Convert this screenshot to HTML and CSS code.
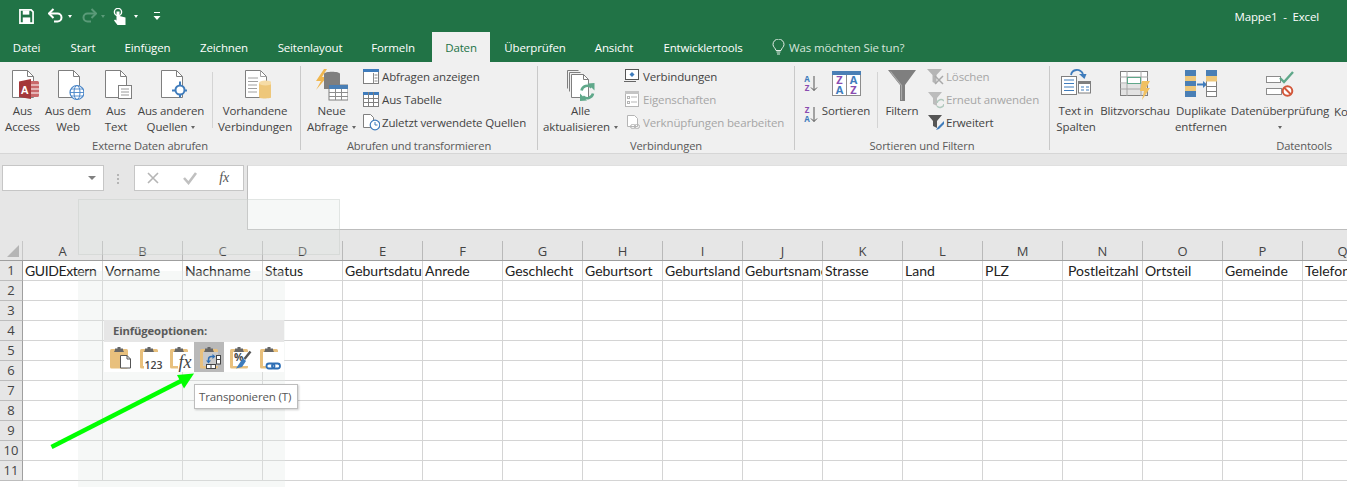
FILE: index.html
```html
<!DOCTYPE html>
<html lang="de">
<head>
<meta charset="utf-8">
<title>Mappe1 - Excel</title>
<link rel="stylesheet" href="styles.css">
</head>
<body>
<svg class="defs" width="0" height="0">
  <defs>
    <symbol id="clip" viewBox="0 0 30 30">
      <rect x="6" y="7" width="18" height="19.500" rx="1.500" fill="#e8c07d"/>
      <path d="M11 8V6.500h2.500V5h3v1.500H19V8l1 2H10z" fill="#666"/>
    </symbol>
    <symbol id="clipo" viewBox="0 0 30 30">
      <rect x="6" y="7" width="18" height="19.500" rx="1.500" fill="#e8c07d"/>
      <rect x="9" y="10" width="15" height="14" fill="#fff"/>
      <path d="M11 8V6.500h2.500V5h3v1.500H19V8l1 2H10z" fill="#666"/>
    </symbol>
  </defs>
</svg>

<header class="titlebar">
  <div class="qat">
    <svg class="q-save" width="15" height="15" viewBox="0 0 16 16"><path d="M1 1h12l2 2v12H1z" fill="none" stroke="#fff" stroke-width="1.800"/><rect x="4" y="1.500" width="7" height="4.500" fill="#fff"/><rect x="4" y="9" width="8" height="6" fill="#fff"/></svg>
    <svg class="q-undo" width="15" height="16" viewBox="0 0 15 16"><path d="M2 5.500h7.500a4 4 0 0 1 0 8H6" fill="none" stroke="#fff" stroke-width="2"/><path d="M5.500 1 1 5.500 5.500 10" fill="none" stroke="#fff" stroke-width="2"/></svg>
    <i class="caret-w"></i>
    <svg class="q-redo" width="15" height="16" viewBox="0 0 15 16"><path d="M13 5.500H5.500a4 4 0 0 0 0 8H9" fill="none" stroke="#5a9a78" stroke-width="2"/><path d="M9.500 1 14 5.500 9.500 10" fill="none" stroke="#5a9a78" stroke-width="2"/></svg>
    <i class="caret-d"></i>
    <svg class="q-touch" width="14" height="17" viewBox="0 0 14 17"><circle cx="5" cy="4" r="3.600" fill="none" stroke="#fff" stroke-width="1.400"/><path d="M3.500 3.500h3V8l6 1.500V17H4.500L1 12.500l1-1L3.500 12.500z" fill="#fff"/></svg>
    <i class="caret-w caret-touch"></i>
    <svg class="q-more" width="8" height="9" viewBox="0 0 8 9"><path d="M1 .5h6" stroke="#fff"/><path d="M.5 4h7L4 8z" fill="#fff"/></svg>
  </div>
  <div class="doc-title">Mappe1&nbsp; -&nbsp; Excel</div>
</header>

<nav class="tabs">
  <span class="tab t-datei">Datei</span>
  <span class="tab t-start">Start</span>
  <span class="tab t-einf">Einfügen</span>
  <span class="tab t-zeich">Zeichnen</span>
  <span class="tab t-seite">Seitenlayout</span>
  <span class="tab t-formel">Formeln</span>
  <span class="tab t-daten active">Daten</span>
  <span class="tab t-pruef">Überprüfen</span>
  <span class="tab t-ansicht">Ansicht</span>
  <span class="tab t-entw">Entwicklertools</span>
  <span class="tell">
    <svg width="13" height="17" viewBox="0 0 13 17"><path d="M4 11.500C3.500 9 1 8 1 5.500a5.500 5.500 0 0 1 11 0c0 2.500-2.500 3.500-3 6z" fill="none" stroke="#e4efe8"/><path d="M4.500 13h4M5 15h3" stroke="#e4efe8"/></svg>
    Was möchten Sie tun?
  </span>
</nav>

<section class="ribbon">
  <div class="group g1">
    <div class="gbody">
      <div class="big w45">
        <svg class="bi" viewBox="6 69 32 32"><path d="M11.500 70.500h15l6 6v21h-21z" fill="#fff" stroke="#7f7f7f"/><path d="M26.500 70.500v6h6" fill="none" stroke="#7f7f7f"/><path d="M30 81h6.500a1.500 1.500 0 0 1 1.500 1.500v13a1.500 1.500 0 0 1-1.500 1.500H30z" fill="#c9696b"/><path d="M30 85h8M30 89h8M30 93h8" stroke="#fff"/><path d="M18 81.500 30 79v20l-12-2z" fill="#a4373a"/><text x="23.800" y="93.500" class="svg-a">A</text></svg>
        <span>Aus</span><span>Access</span>
      </div>
      <div class="big w46">
        <svg class="bi" viewBox="52 69 32 32"><path d="M58.500 70.500h15l6 6v21h-21z" fill="#fff" stroke="#7f7f7f"/><path d="M73.500 70.500v6h6" fill="none" stroke="#7f7f7f"/><circle cx="77" cy="92.500" r="7" fill="#fff" stroke="#4a86c8" stroke-width="1.200"/><ellipse cx="77" cy="92.500" rx="3" ry="7" fill="none" stroke="#4a86c8"/><path d="M70 92.500h14M71 89h12M71 96h12" stroke="#4a86c8" stroke-width=".9"/></svg>
        <span>Aus dem</span><span>Web</span>
      </div>
      <div class="big w50">
        <svg class="bi" viewBox="100 69 32 32"><path d="M105.500 70.500h15l6 6v21h-21z" fill="#fff" stroke="#7f7f7f"/><path d="M120.500 70.500v6h6" fill="none" stroke="#7f7f7f"/><rect x="118.500" y="85.500" width="13" height="13" fill="#fff" stroke="#7f7f7f"/><path d="M121 89h8M121 92h8M121 95h8" stroke="#9a9a9a"/></svg>
        <span>Aus</span><span>Text</span>
      </div>
      <div class="big w60">
        <svg class="bi" viewBox="155 69 32 32"><path d="M161.500 70.500h15l6 6v21h-21z" fill="#fff" stroke="#7f7f7f"/><path d="M176.500 70.500v6h6" fill="none" stroke="#7f7f7f"/><path d="M180 81.500v16M172 90.500h15.500" stroke="#3f7cbc" stroke-width="2"/><circle cx="180" cy="90" r="4.500" fill="#fff" stroke="#3f7cbc" stroke-width="2"/></svg>
        <span>Aus anderen</span><span>Quellen<i class="caret"></i></span>
      </div>
      <div class="vsep ml11"></div>
      <div class="big w84">
        <svg class="bi" viewBox="239 69 32 32"><path d="M245.500 70.500h15l6 6v21h-21z" fill="#fff" stroke="#7f7f7f"/><path d="M260.500 70.500v6h6M248 78h10M248 81.500h10M248 85h9M248 88.500h9M248 92h9" fill="none" stroke="#a0a0a0"/><path d="M259 83v14c0 2 13 2 13 0V83z" fill="#eec77a"/><ellipse cx="265.500" cy="83" rx="6.500" ry="2.500" fill="#f6dca6"/></svg>
        <span>Vorhandene</span><span>Verbindungen</span>
      </div>
    </div>
    <div class="glabel">Externe Daten abrufen</div>
  </div>

  <div class="group g2">
    <div class="gbody">
      <div class="big w61">
        <svg class="bi" viewBox="316 69 32 32"><path d="M324 69l-8 12h5l-5 9 11-13h-5l5-8z" fill="#f0b64e"/><path d="M324 74v15h16V74c0-3-16-3-16 0z" fill="#7f7f7f"/><rect x="329" y="85" width="19" height="15" fill="#fff" stroke="#7f7f7f"/><rect x="329" y="85" width="19" height="4" fill="#4a7fb5"/><path d="M335.500 89v11M341.500 89v11M329 92.500h19M329 96.500h19" stroke="#8d8d8d"/></svg>
        <span>Neue</span><span>Abfrage<i class="caret"></i></span>
      </div>
      <div class="smalls">
        <div class="small"><svg class="si" viewBox="362 68 18 18"><rect x="363.500" y="69.500" width="15" height="14" fill="#fff" stroke="#7f7f7f"/><rect x="363" y="69" width="16" height="3" fill="#3f7cbc"/><path d="M373.500 73v10M374.500 75h3M374.500 78h3M374.500 81h3" stroke="#8a8a8a"/></svg>Abfragen anzeigen</div>
        <div class="small"><svg class="si" viewBox="362 91 18 18"><rect x="363.500" y="92.500" width="15" height="14" fill="#fff" stroke="#7f7f7f"/><rect x="363" y="92" width="16" height="3" fill="#3f7cbc"/><path d="M368.500 92v15M373.500 92v15M363 98.500h16M363 102.500h16" stroke="#7f7f7f"/></svg>Aus Tabelle</div>
        <div class="small"><svg class="si" viewBox="362 114 18 18"><path d="M363.500 114.500h7l3 3v10h-10z" fill="#fff" stroke="#7f7f7f"/><circle cx="375" cy="125" r="4.800" fill="#fff" stroke="#3f7cbc" stroke-width="1.200"/><path d="M375 122v3h2.500" fill="none" stroke="#3f7cbc"/></svg>Zuletzt verwendete Quellen</div>
      </div>
    </div>
    <div class="glabel">Abrufen und transformieren</div>
  </div>

  <div class="group g3">
    <div class="gbody">
      <div class="big w85">
        <svg class="bi" viewBox="566 69 32 32"><path d="M568.500 70.500h11M568.500 70.500v18M570.500 72.500h11M570.500 72.500v19" fill="none" stroke="#7f7f7f"/><path d="M572.500 74.500h12l5 5v18h-17z" fill="#fff" stroke="#7f7f7f"/><path d="M584.500 74.500v5h5" fill="none" stroke="#7f7f7f"/><path d="M582.500 90.500a6 6 0 0 1 10-3" fill="none" stroke="#5fa88a" stroke-width="2.600"/><path d="M595.500 90.500V83l-7 .5z" fill="#5fa88a"/><path d="M594 93.500a6 6 0 0 1-10 3" fill="none" stroke="#5fa88a" stroke-width="2.600"/><path d="M581 93.500v7.500l7-.5z" fill="#5fa88a"/></svg>
        <span>Alle</span><span>aktualisieren<i class="caret"></i></span>
      </div>
      <div class="smalls">
        <div class="small"><svg class="si" viewBox="623 68 18 18"><rect x="625.500" y="69.500" width="13" height="10" fill="#fff" stroke="#555"/><path d="M624 81.500h12" stroke="#666"/><path d="M632 72l2.500 2.500L632 77l-2.500-2.500z" fill="#3f7cbc"/></svg>Verbindungen</div>
        <div class="small disabled"><svg class="si" viewBox="623 91 18 18"><rect x="625.500" y="91.500" width="13" height="15" fill="#fff" stroke="#b5b5b5"/><rect x="625" y="91" width="14" height="3" fill="#c4c4c4"/><path d="M631 97h6M631 102h6" stroke="#b5b5b5"/><rect x="627.500" y="96.500" width="2" height="2" fill="none" stroke="#b5b5b5"/><rect x="627.500" y="101.500" width="2" height="2" fill="none" stroke="#b5b5b5"/></svg>Eigenschaften</div>
        <div class="small disabled"><svg class="si" viewBox="623 114 18 18"><path d="M627.500 115.500h7l3 3v8h-10z" fill="#fff" stroke="#b5b5b5"/><rect x="630.500" y="124.500" width="5" height="4" rx="2" fill="none" stroke="#b5b5b5"/><rect x="634.500" y="124.500" width="5" height="4" rx="2" fill="none" stroke="#b5b5b5"/></svg>Verknüpfungen bearbeiten</div>
      </div>
    </div>
    <div class="glabel">Verbindungen</div>
  </div>

  <div class="group g4">
    <div class="gbody">
      <div class="sorts">
        <svg class="sort-ic" viewBox="0 0 18 18"><text x="5" y="7" class="sv-b">A</text><text x="5" y="15.500" class="sv-p">Z</text><path d="M12 1v14.500M9 12.500l3 3 3-3" fill="none" stroke="#555"/></svg>
        <svg class="sort-ic" viewBox="0 0 18 18"><text x="5" y="7" class="sv-p">Z</text><text x="5" y="15.500" class="sv-b">A</text><path d="M12 1v14.500M9 12.500l3 3 3-3" fill="none" stroke="#555"/></svg>
      </div>
      <div class="big w52">
        <svg class="bi" viewBox="830 69 32 32"><rect x="832.500" y="71.500" width="28" height="24" fill="#fff" stroke="#8c8c8c"/><rect x="832" y="71" width="29" height="4" fill="#4a7fb5"/><path d="M846.500 75v21" stroke="#8c8c8c"/><text x="839.500" y="84" class="sv-pl">Z</text><text x="839.500" y="94" class="sv-bl">A</text><text x="853.500" y="84" class="sv-bl">A</text><text x="853.500" y="94" class="sv-pl">Z</text></svg>
        <span>Sortieren</span>
      </div>
      <div class="vsep ml5"></div>
      <div class="big w48">
        <svg class="bi" viewBox="886 69 32 32"><path d="M888 70h28l-11 15v16h-5V85z" fill="#7f7f7f"/><path d="M890.500 71.500l11 14V100" fill="none" stroke="#a8a8a8" stroke-width="1.200"/></svg>
        <span>Filtern</span>
      </div>
      <div class="smalls">
        <div class="small disabled"><svg class="si" viewBox="926 68 18 18"><path d="M927 69h15l-5.500 6v9l-4-2v-7z" fill="#b5b5b5"/><path d="M935 76l8 8M943 76l-8 8" stroke="#a9a9a9" stroke-width="1.500"/></svg>Löschen</div>
        <div class="small disabled"><svg class="si" viewBox="926 91 18 18"><path d="M928 92h14l-5 6v8l-4-2v-6z" fill="#bcbcbc"/><path d="M937 103a4 4 0 0 1 7-2M944 104a4 4 0 0 1-7 2" fill="none" stroke="#b0c9bd" stroke-width="1.500"/></svg>Erneut anwenden</div>
        <div class="small"><svg class="si" viewBox="926 114 18 18"><path d="M928 115h14l-5 6v7l-4-2v-5z" fill="#555"/><path d="M945 120l-7 7-2 3 3-1 7-7z" fill="#3f7cbc"/></svg>Erweitert</div>
      </div>
    </div>
    <div class="glabel">Sortieren und Filtern</div>
  </div>

  <div class="group g5">
    <div class="gbody">
      <div class="big w52">
        <svg class="bi" viewBox="1060 69 32 32"><rect x="1061.500" y="76.500" width="15" height="18" fill="#fff" stroke="#7f7f7f"/><path d="M1064 80h10M1064 83.500h10M1064 87h10M1064 90.500h10" stroke="#3f7cbc"/><rect x="1078.500" y="81.500" width="12" height="11.500" fill="#fff" stroke="#7f7f7f"/><rect x="1078" y="81" width="13" height="3" fill="#7f7f7f"/><path d="M1081 87h3M1086 87h3M1081 90h3M1086 90h3" stroke="#3f7cbc"/><path d="M1071 75c1-6 9-7 12-1" fill="none" stroke="#3f7cbc" stroke-width="1.800"/><path d="M1079 74h7.500l-2 5z" fill="#3f7cbc"/></svg>
        <span>Text in</span><span>Spalten</span>
      </div>
      <div class="big w66">
        <svg class="bi" viewBox="1120 69 32 32"><rect x="1121.500" y="71.500" width="27" height="24" fill="#fff" stroke="#7f7f7f"/><rect x="1122" y="84" width="26" height="11" fill="#e3e3e3"/><path d="M1121 77h28M1121 83h28M1121 89h28M1128 71v25M1142 71v25" stroke="#a6a6a6"/><rect x="1128.500" y="77.500" width="13" height="6" fill="#fff" stroke="#5fa88a"/><path d="M1143 81h8l-4 7h4l-8 12 2-9h-4z" fill="#f0c060"/></svg>
        <span>Blitzvorschau</span>
      </div>
      <div class="big w66">
        <svg class="bi" viewBox="1185 69 32 32"><rect x="1185" y="70" width="11" height="27" fill="#4a7fb5"/><rect x="1185" y="76" width="11" height="5" fill="#eec77a"/><rect x="1185" y="86" width="11" height="5" fill="#eec77a"/><path d="M1197 84.500h7" stroke="#3f7cbc" stroke-width="2"/><path d="M1203 81l4 3.500-4 3.500z" fill="#3f7cbc"/><rect x="1206.500" y="70.500" width="10" height="26" fill="#fff" stroke="#7f7f7f"/><rect x="1206" y="70" width="11" height="6" fill="#4a7fb5"/><rect x="1206" y="76" width="11" height="5.500" fill="#eec77a"/><path d="M1206 86.500h11M1206 91.500h11" stroke="#7f7f7f"/></svg>
        <span>Duplikate</span><span>entfernen</span>
      </div>
      <div class="big w92">
        <svg class="bi" viewBox="1264 69 32 32"><rect x="1266.500" y="76.500" width="14" height="6" fill="#fff" stroke="#8c8c8c"/><rect x="1266.500" y="88.500" width="15" height="6" fill="#fff" stroke="#8c8c8c"/><path d="M1280 78l4 4 9-10" fill="none" stroke="#5fa88a" stroke-width="2.400"/><circle cx="1287.500" cy="91" r="4.800" fill="#fff" stroke="#d2573a" stroke-width="2"/><path d="M1284 87.500l7 7" stroke="#d2573a" stroke-width="2"/></svg>
        <span>Datenüberprüfung</span><span><i class="caret solo"></i></span>
      </div>
      <div class="clipped">Ko</div>
    </div>
    <div class="glabel">Datentools</div>
  </div>
</section>

<section class="fbar">
  <div class="namebox"><i class="caret-g"></i></div>
  <div class="grip"></div>
  <div class="fxbox">
    <svg width="14" height="14" viewBox="0 0 14 14"><path d="M2 2l10 10M12 2L2 12" stroke="#b5b5b5" stroke-width="1.600"/></svg>
    <svg width="16" height="14" viewBox="0 0 16 14"><path d="M2 7l4.500 5L14 2" fill="none" stroke="#c0c0c0" stroke-width="2.600"/></svg>
    <span class="fx">fx</span>
  </div>
  <div class="finput"></div>
</section>

<section class="sheet">
  <div class="hrow">
    <div class="corner"><i class="tri"></i></div>
    <div class="ch">A</div><div class="ch">B</div><div class="ch">C</div><div class="ch">D</div><div class="ch">E</div><div class="ch">F</div><div class="ch">G</div><div class="ch">H</div><div class="ch">I</div><div class="ch">J</div><div class="ch">K</div><div class="ch">L</div><div class="ch">M</div><div class="ch">N</div><div class="ch">O</div><div class="ch">P</div><div class="ch">Q</div>
  </div>
  <div class="row">
    <div class="rh">1</div>
    <div class="cell tight">GUIDExtern</div><div class="cell">Vorname</div><div class="cell">Nachname</div><div class="cell">Status</div><div class="cell">Geburtsdatum</div><div class="cell">Anrede</div><div class="cell">Geschlecht</div><div class="cell">Geburtsort</div><div class="cell">Geburtsland</div><div class="cell">Geburtsname</div><div class="cell">Strasse</div><div class="cell">Land</div><div class="cell">PLZ</div><div class="cell indent">Postleitzahl</div><div class="cell">Ortsteil</div><div class="cell">Gemeinde</div><div class="cell">Telefon</div>
  </div>
  <div class="row"><div class="rh">2</div><div class="blank"></div></div>
  <div class="row"><div class="rh">3</div><div class="blank"></div></div>
  <div class="row"><div class="rh">4</div><div class="blank"></div></div>
  <div class="row"><div class="rh">5</div><div class="blank"></div></div>
  <div class="row"><div class="rh">6</div><div class="blank"></div></div>
  <div class="row"><div class="rh">7</div><div class="blank"></div></div>
  <div class="row"><div class="rh">8</div><div class="blank"></div></div>
  <div class="row"><div class="rh">9</div><div class="blank"></div></div>
  <div class="row"><div class="rh">10</div><div class="blank"></div></div>
  <div class="row"><div class="rh">11</div><div class="blank"></div></div>
</section>

<div class="ghost ghost-top"></div>
<div class="ghost ghost-bottom"></div>

<div class="paste">
  <div class="paste-head">Einfügeoptionen:</div>
  <div class="paste-row">
    <div class="pb"><svg viewBox="0 0 30 30"><use href="#clip"/><path d="M16.500 13.500h6.500l3.500 3.500v9h-10z" fill="#fff" stroke="#555"/><path d="M23 13.500V17h3.500" fill="none" stroke="#555"/></svg></div>
    <div class="pb"><svg viewBox="0 0 30 30"><use href="#clipo"/><rect x="10" y="18" width="20" height="10" fill="#fff"/><text x="10.500" y="26.500" class="p123">123</text></svg></div>
    <div class="pb"><svg viewBox="0 0 30 30"><use href="#clipo"/><rect x="14" y="10" width="13" height="18" fill="#fff"/><text x="14.500" y="25.500" class="pfx">fx</text></svg></div>
    <div class="pb hot"><svg viewBox="0 0 30 30"><use href="#clip"/><rect x="9" y="10" width="15" height="14" fill="#c9c9c9"/><rect x="22.500" y="13.500" width="4" height="8.500" fill="#fff" stroke="#444"/><path d="M22.500 17.500h4" stroke="#444"/><rect x="12.500" y="22.500" width="9" height="4" fill="#fff" stroke="#444"/><path d="M17 22.500v4" stroke="#444"/><path d="M14.500 19v-1.500a3 3 0 0 1 3-3H19" fill="none" stroke="#2f6fb5" stroke-width="1.500"/><path d="M18.500 12l3 2.500-3 2.500zM12 18.500h5L14.500 21.500z" fill="#2f6fb5"/></svg></div>
    <div class="pb"><svg viewBox="0 0 30 30"><use href="#clipo"/><text x="10" y="19" class="ppct">%</text><path d="M26.500 9.500 20.500 17" stroke="#555" stroke-width="2.400"/><path d="M19 16l3 3-4 6-6 1.500z" fill="#3f7cbc"/></svg></div>
    <div class="pb"><svg viewBox="0 0 30 30"><use href="#clipo"/><rect x="12" y="20" width="16" height="8" fill="#fff"/><rect x="12.500" y="21.500" width="8" height="5" rx="2.500" fill="none" stroke="#2f6fb5" stroke-width="1.800"/><rect x="18" y="21.500" width="8" height="5" rx="2.500" fill="none" stroke="#2f6fb5" stroke-width="1.800"/></svg></div>
  </div>
</div>

<div class="tooltip">Transponieren (T)</div>

<svg class="arrow" width="160" height="90" viewBox="40 365 160 90"><path d="M51.500 447 181 381" stroke="#0f0" stroke-width="4.500" fill="none"/><path d="M194 373.500 177 375 184 388.500z" fill="#0f0"/></svg>
</body>
</html>
```

FILE: styles.css
```css
* { box-sizing: border-box; }
html, body { margin: 0; padding: 0; }
body {
  position: relative;
  width: 1347px;
  height: 487px;
  overflow: hidden;
  background: #fff;
  font-family: "Open Sans", "Noto Sans", "Liberation Sans", sans-serif;
  font-size: 11.500px;
  letter-spacing: -.14px;
  color: #444;
}
svg text { letter-spacing: 0; }
.defs { position: absolute; }

/* title bar */
.titlebar { height: 32px; background: #217346; display: flex; align-items: center; color: #fff; }
.qat { display: flex; align-items: center; padding-left: 19px; }
.q-undo { margin-left: 14px; }
.q-redo { margin-left: 10px; }
.q-touch { margin-left: 8px; }
.q-more { margin-left: 15px; }
.caret-w, .caret-d { width: 0; height: 0; border: 2.500px solid transparent; border-bottom: 0; border-top: 3px solid #fff; margin-left: 5px; }
.caret-d { border-top-color: #5a9a78; margin-left: 4px; }
.caret-touch { margin-left: 7px; }
.doc-title { margin-left: auto; margin-right: 28px; }

/* tabs */
.tabs { height: 30px; background: #217346; display: flex; color: #fff; }
.tab { display: flex; align-items: center; justify-content: center; height: 30px; }
.t-datei { width: 53px; }
.t-start { width: 60px; }
.t-einf { width: 69px; }
.t-zeich { width: 84px; }
.t-seite { width: 88px; }
.t-formel { width: 78px; }
.t-daten { width: 58px; }
.t-pruef { width: 90px; }
.t-ansicht { width: 68px; }
.t-entw { width: 110px; }
.active { background: #f0f0f0; color: #217346; }
.tell { display: flex; align-items: center; gap: 4px; margin-left: 14px; color: #d6e6dc; }

/* ribbon */
.ribbon { height: 92px; background: #f0f0f0; border-bottom: 1px solid #d6d6d6; display: flex; overflow: hidden; }
.group { height: 84px; margin-top: 4px; border-right: 1px solid #c9c9c9; flex: none; display: flex; flex-direction: column; }
.g1 { width: 301px; }
.g2 { width: 237px; }
.g3 { width: 257px; }
.g4 { width: 255px; }
.g5 { width: 508px; border-right: 0; }
.gbody { height: 73px; display: flex; }
.glabel { height: 11px; line-height: 14px; text-align: center; color: #595959; font-size: 11.200px; }
.big { flex: none; display: flex; flex-direction: column; align-items: center; padding-top: 1px; line-height: 16px; white-space: nowrap; }
.big > span { display: block; }
.bi { width: 32px; height: 32px; margin: 2px 0; flex: none; }
.w45 { width: 45px; }
.w46 { width: 46px; }
.w48 { width: 48px; }
.w50 { width: 50px; }
.w52 { width: 52px; }
.w60 { width: 60px; }
.w61 { width: 61px; }
.w66 { width: 66px; }
.w84 { width: 84px; }
.w85 { width: 85px; }
.w92 { width: 92px; }
.vsep { width: 1px; height: 56px; margin-top: 6px; background: #d4d4d4; flex: none; }
.ml11 { margin-left: 11px; }
.ml5 { margin-left: 5px; }
.caret { display: inline-block; width: 0; height: 0; margin-left: 4px; vertical-align: 2px; border: 2.500px solid transparent; border-bottom: 0; border-top: 3px solid #666; }
.caret.solo { margin-left: 0; }
.smalls { display: flex; flex-direction: column; flex: none; margin-top: -1px; }
.small { height: 23px; display: flex; align-items: center; gap: 2px; white-space: nowrap; }
.si { width: 18px; height: 18px; flex: none; }
.disabled { color: #a6a6a6; }
.sorts { display: flex; flex-direction: column; gap: 13px; margin: 9px 0 0 7px; flex: none; }
.sort-ic { width: 18px; height: 18px; display: block; }
.sv-b, .sv-p { font: 700 8px "Open Sans", sans-serif; text-anchor: middle; }
.sv-b, .sv-bl { fill: #3f7cbc; }
.sv-p, .sv-pl { fill: #8a4db0; }
.sv-pl, .sv-bl { font: 700 11px "Open Sans", sans-serif; text-anchor: middle; }
.svg-a { font: 700 11px "Liberation Sans", sans-serif; fill: #fff; text-anchor: middle; }
.clipped { margin-left: 8px; padding-top: 38px; line-height: 16px; }

/* formula bar */
.fbar { height: 87px; background: #e6e6e6; display: flex; align-items: flex-start; padding: 11px 0 0 2px; }
.namebox { width: 102px; height: 26px; background: #fff; border: 1px solid #c6c6c6; display: flex; align-items: center; justify-content: flex-end; padding-right: 7px; }
.caret-g { width: 0; height: 0; border: 4px solid transparent; border-bottom: 0; border-top: 4px solid #808080; }
.grip { width: 2px; height: 10px; margin: 9px 15px 0 13px; background: repeating-linear-gradient(#b5b5b5 0 2px, transparent 2px 4px); }
.fxbox { width: 110px; height: 26px; background: #fff; border: 1px solid #c6c6c6; display: flex; align-items: center; justify-content: space-between; padding: 0 14px 0 11px; }
.fx { font: italic 400 14px "Liberation Serif", serif; color: #555; }
.finput { flex: 1; height: 65px; margin-left: 3px; background: #fff; border-left: 1px solid #bdbdbd; border-top: 1px solid #e0e0e0; border-bottom: 1px solid #bdbdbd; }

/* sheet */
.hrow { display: flex; height: 20px; background: #e6e6e6; border-bottom: 1px solid #9f9f9f; }
.corner { width: 23px; flex: none; position: relative; border-right: 1px solid #c6c6c6; }
.tri { position: absolute; left: 7px; top: 4px; width: 0; height: 0; border-left: 12px solid transparent; border-bottom: 12px solid #b5b5b5; }
.ch { width: 80px; flex: none; border-right: 1px solid #b9b9b9; text-align: center; line-height: 20px; font-size: 13px; letter-spacing: 0; color: #444; }
.row { display: flex; height: 20px; }
.rh { width: 23px; flex: none; background: #e6e6e6; border-right: 1px solid #9f9f9f; border-bottom: 1px solid #bdbdbd; text-align: center; line-height: 19px; font-size: 13px; letter-spacing: 0; color: #444; }
.cell { width: 80px; flex: none; padding-left: 2px; border-right: 1px solid #d4d4d4; border-bottom: 1px solid #d4d4d4; overflow: hidden; white-space: nowrap; font: 14px/19px Lato, sans-serif; letter-spacing: 0; color: #222; }
.tight { letter-spacing: -.4px; }
.indent { padding-left: 5px; }
.blank { flex: 1; background: linear-gradient(to top, #d4d4d4 1px, transparent 1px), repeating-linear-gradient(to right, transparent 0 79px, #d4d4d4 79px 80px); }

/* overlays */
.ghost { position: absolute; background: rgba(225, 232, 228, .3); }
.ghost-top { left: 78px; top: 199px; width: 262px; height: 56px; border: 1px solid rgba(195, 200, 197, .4); }
.ghost-bottom { left: 78px; top: 271px; width: 207px; height: 216px; }
.paste { position: absolute; left: 104px; top: 320px; width: 180px; background: #fff; }
.paste-head { height: 22px; padding-left: 9px; background: #e6e6e6; font-weight: 700; line-height: 21px; font-size: 11.300px; color: #5a5a5a; }
.paste-row { display: flex; height: 30px; }
.pb { width: 30px; height: 30px; }
.pb svg { display: block; width: 30px; height: 30px; }
.hot { background: #b9b9b9; }
.p123 { font: 600 10.500px "Open Sans", sans-serif; fill: #444; }
.pfx { font: italic 18px "Liberation Serif", serif; fill: #444; }
.ppct { font: 700 10.500px "Open Sans", sans-serif; fill: #444; }
.tooltip { position: absolute; left: 194px; top: 384px; width: 104px; height: 25px; padding-left: 4px; line-height: 23px; background: #fff; border: 1px solid #bdbdbd; box-shadow: 1px 1px 2px rgba(0,0,0,.2); color: #555; white-space: nowrap; }
.arrow { position: absolute; left: 40px; top: 365px; }
```
